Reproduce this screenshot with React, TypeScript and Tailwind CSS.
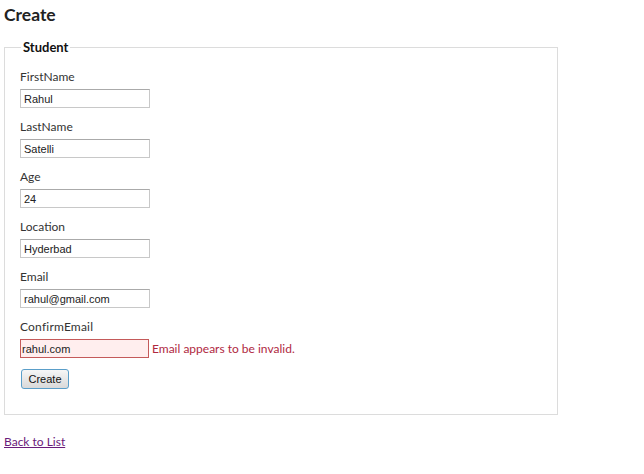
import React from "react";

const fields = [
  { label: "FirstName", value: "Rahul" },
  { label: "LastName", value: "Satelli" },
  { label: "Age", value: "24" },
  { label: "Location", value: "Hyderbad" },
  { label: "Email", value: "rahul@gmail.com" },
];

export default function App() {
  return (
    <div className="w-[644px] h-[474px] bg-white text-[#333] font-['Lato',sans-serif] text-[12px] px-[4px] pt-[5px]">
      <h2 className="text-[17.5px] font-bold leading-[20px] text-[#222]">Create</h2>
      <fieldset className="mt-[14px] w-[554px] h-[376px] border border-[#dcdcdc] pl-[15px] pr-[10px] pb-[10px]">
        <legend className="ml-[1px] px-[2px] text-[13px] font-bold text-[#111] leading-[16px]">Student</legend>
        <div className="flex flex-col pt-[14px]">
          {fields.map((f) => (
            <div key={f.label} className="flex flex-col h-[50px]">
              <label className="h-[20px] leading-[16px] text-[#333]">{f.label}</label>
              <input
                readOnly
                value={f.value}
                className="w-[130px] h-[19px] border border-[#c8c8c8] border-t-[#aaa] bg-white px-[3px] text-[11px] font-['Liberation_Sans',sans-serif] text-[#222] outline-none"
              />
            </div>
          ))}
          <div className="flex flex-col h-[50px]">
            <label className="h-[20px] leading-[16px] text-[#333] tracking-[0.2px]">ConfirmEmail</label>
            <div className="flex items-center">
              <input
                readOnly
                value="rahul.com"
                className="w-[129px] h-[19px] border border-[#c45a5a] bg-[#ffeeee] px-[1px] text-[11px] font-['Liberation_Sans',sans-serif] text-[#222] outline-none"
              />
              <span className="ml-[3px] text-[#b0283f]">Email appears to be invalid.</span>
            </div>
          </div>
          <div className="ml-[1px]">
            <button className="w-[48px] h-[20px] rounded-[3px] border border-[#5a9ec9] bg-gradient-to-b from-[#f6f6f6] to-[#d9d9d9] text-[11px] font-['Liberation_Sans',sans-serif] text-[#111] leading-[16px]">
              Create
            </button>
          </div>
        </div>
      </fieldset>
      <div className="mt-[18px]">
        <a href="#" className="text-[#6a1b7a] underline text-[12px]">Back to List</a>
      </div>
    </div>
  );
}
